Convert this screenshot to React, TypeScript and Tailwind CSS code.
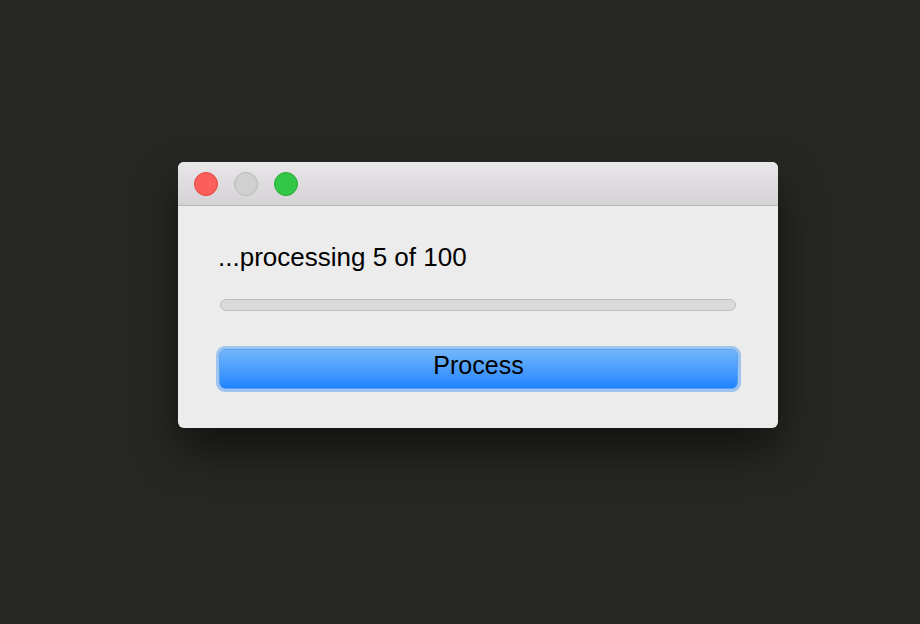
import React from "react";

function TrafficLight({ color, border }: { color: string; border: string }) {
  return <div className={`w-6 h-6 rounded-full border ${color} ${border}`} />;
}

export default function App() {
  return (
    <div
      className="w-[920px] h-[624px] bg-[#272823] pl-[178px] pt-[162px] overflow-hidden"
      style={{ fontFamily: '"Liberation Sans", Arial, sans-serif' }}
    >
      <div className="w-[600px] h-[266px] rounded-[6px] bg-[#ececec] overflow-hidden shadow-[0_22px_45px_rgba(0,0,0,0.55)] flex flex-col">
        {/* Title bar */}
        <div className="h-[44px] shrink-0 bg-gradient-to-b from-[#e9e7e9] to-[#d4d2d4] border-b border-[#b9b8b9] flex items-center gap-4 pl-4">
          <TrafficLight color="bg-[#fc5f5a]" border="border-[#e2463f]" />
          <TrafficLight color="bg-[#d1d0d1]" border="border-[#b9b8b9]" />
          <TrafficLight color="bg-[#33c748]" border="border-[#27aa35]" />
        </div>

        {/* Content */}
        <div className="flex flex-col pl-10 pt-[36px]">
          <div className="text-[26px] leading-[30px] text-black">...processing 5 of 100</div>

          <div className="ml-[2px] mt-[27px] w-[516px] h-3 rounded-full bg-[#dadada] border border-[#bfbfbf]" />

          <button className="ml-[1px] mt-[38px] w-[519px] h-10 pb-[7px] rounded-[6px] border border-[#5a9ff0] bg-gradient-to-b from-[#72b6fa] to-[#1b83ff] text-black text-[25px] leading-none shadow-[0_0_0_3px_#9dc4f1]">
            Process
          </button>
        </div>
      </div>
    </div>
  );
}
